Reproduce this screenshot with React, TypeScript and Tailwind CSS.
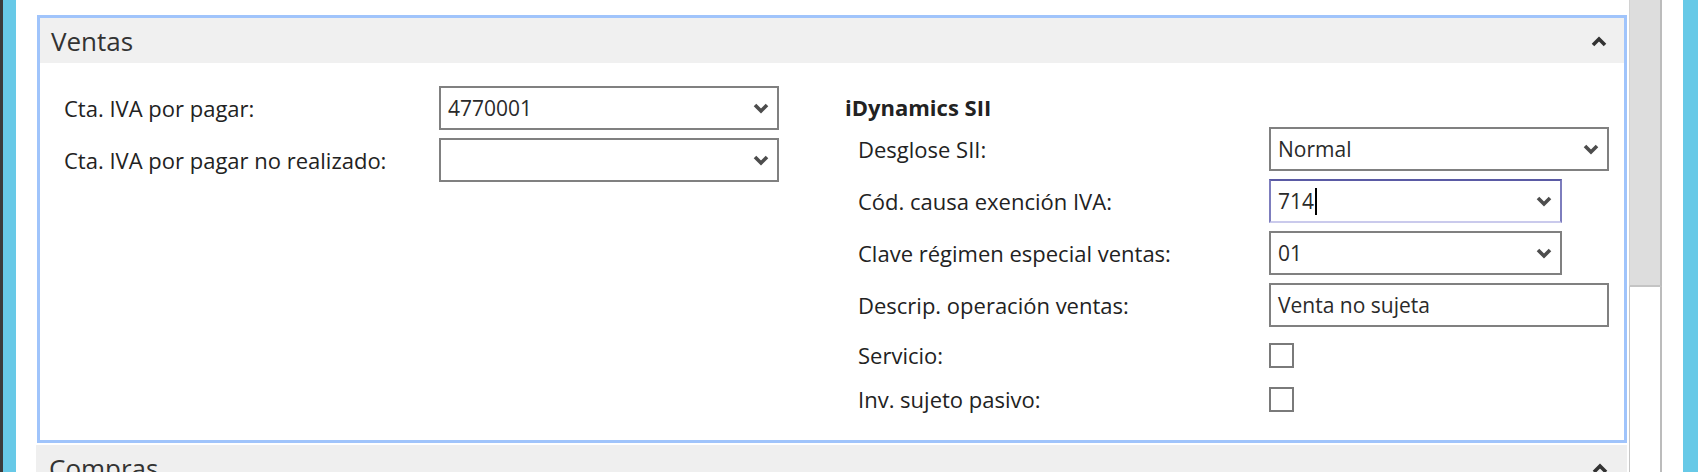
import React from "react";

function Chevron({ up = false, className = "" }: { up?: boolean; className?: string }) {
  return (
    <svg width="16" height="12" viewBox="0 0 16 12" className={className}>
      <path
        d={up ? "M2 10 L8 4 L14 10" : "M2 3 L8 9 L14 3"}
        fill="none"
        stroke="currentColor"
        strokeWidth="3.6"
      />
    </svg>
  );
}

interface SelectProps {
  value?: string;
  wide?: boolean;
  focused?: boolean;
  arrow?: boolean;
}

function Select({ value = "", wide = true, focused = false, arrow = true }: SelectProps) {
  return (
    <div
      className={`flex h-[44px] items-center justify-between border-2 pl-[7px] pr-[8px] text-[21px] text-[#2a2a2a] ${
        wide ? "w-[340px]" : "w-[293px]"
      } ${
        focused
          ? "border-t-[#5a5aa4] border-l-[#7d7dbd] border-r-[#7d7dbd] border-b-[#cacaec]"
          : "border-[#808080]"
      }`}
    >
      <span className="flex items-center leading-none">
        {value}
        {focused && <span className="ml-[1px] inline-block h-[27px] w-[2px] bg-black" />}
      </span>
      {arrow && <Chevron className="text-[#4d4d4d]" />}
    </div>
  );
}

function Checkbox() {
  return <div className="h-[25px] w-[25px] border-2 border-[#7a7a7a] bg-white" />;
}

function Row({ label, children, labelWidth }: { label: string; children: React.ReactNode; labelWidth: string }) {
  return (
    <div className="flex h-[44px] items-center">
      <div className={`${labelWidth} text-[22px]`}>{label}</div>
      {children}
    </div>
  );
}

export default function App() {
  return (
    <div className="flex h-[472px] w-[1698px] overflow-hidden bg-white font-['Open_Sans',sans-serif] text-[#222]">
      <div className="w-[3px] bg-[#3b3b3b]" />
      <div className="w-[13px] bg-[#67c9e7]" />

      {/* page content */}
      <div className="flex w-[1613px] flex-col pl-[21px] pt-[15px]">
        <section className="w-[1590px] border-[3px] border-[#a0c4fb]">
          <header className="flex h-[45px] items-center justify-between bg-[#f0f0f0] pl-[11px] pr-[17px]">
            <span className="text-[26px] leading-none text-[#333]">Ventas</span>
            <Chevron up className="text-[#333]" />
          </header>

          <div className="flex h-[377px] bg-white pl-[24px]">
            {/* left column */}
            <div className="flex w-[781px] flex-col gap-[8px] pt-[23px]">
              <Row label="Cta. IVA por pagar:" labelWidth="w-[375px]">
                <Select value="4770001" />
              </Row>
              <Row label="Cta. IVA por pagar no realizado:" labelWidth="w-[375px]">
                <Select />
              </Row>
            </div>

            {/* right column */}
            <div className="flex flex-col pt-[29px]">
              <div className="mb-[5px] text-[22px] font-bold leading-[30px] text-[#222]">iDynamics SII</div>
              <div className="flex flex-col gap-[8px] pl-[13px]">
                <Row label="Desglose SII:" labelWidth="w-[411px]">
                  <Select value="Normal" />
                </Row>
                <Row label="Cód. causa exención IVA:" labelWidth="w-[411px]">
                  <Select value="714" wide={false} focused />
                </Row>
                <Row label="Clave régimen especial ventas:" labelWidth="w-[411px]">
                  <Select value="01" wide={false} />
                </Row>
                <Row label="Descrip. operación ventas:" labelWidth="w-[411px]">
                  <Select value="Venta no sujeta" arrow={false} />
                </Row>
              </div>
              <div className="mt-[6px] flex flex-col pl-[13px]">
                <Row label="Servicio:" labelWidth="w-[411px]">
                  <Checkbox />
                </Row>
                <Row label="Inv. sujeto pasivo:" labelWidth="w-[411px]">
                  <Checkbox />
                </Row>
              </div>
            </div>
          </div>
        </section>

        <header className="mt-[2px] flex h-[46px] w-[1591px] -ml-px shrink-0 items-center justify-between bg-[#efefef] pl-[13px] pr-[19px]">
          <span className="text-[26px] leading-none text-[#333]">Compras</span>
          <Chevron up className="text-[#333]" />
        </header>
      </div>

      {/* scrollbar */}
      <div className="flex w-[33px] flex-col">
        <div className="h-[287px] border-b-2 border-l border-r-2 border-b-[#c4c4c4] border-l-[#d2d2d2] border-r-[#bcbcbc] bg-[#dddddd]" />
        <div className="flex-1 border-l border-r-2 border-l-[#c6c6c6] border-r-[#bcbcbc] bg-white" />
      </div>
      <div className="w-[21px] bg-white" />
      <div className="w-[15px] bg-[#67c9e7]" />
    </div>
  );
}
